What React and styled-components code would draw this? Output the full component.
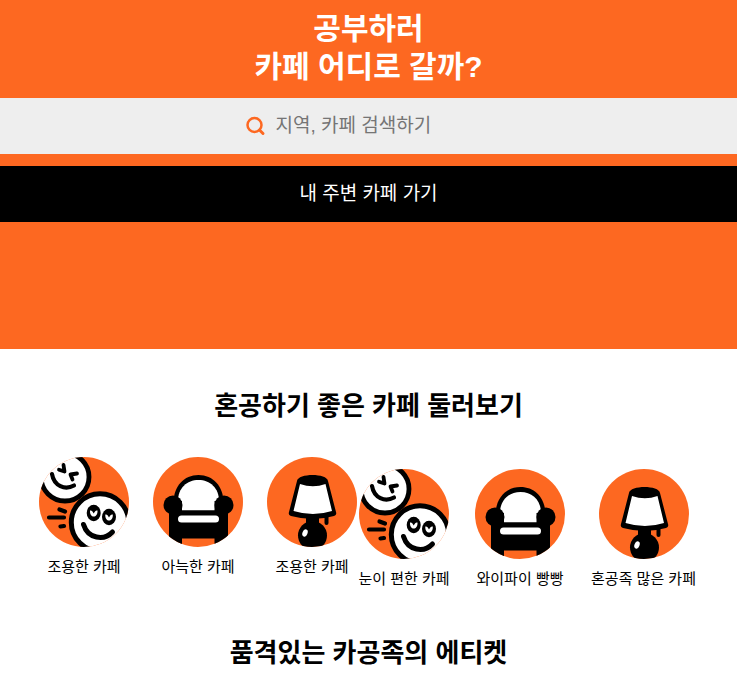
import React from "react";
import styled, { createGlobalStyle } from "styled-components";

const ORANGE = "#fd6821";

const GlobalStyle = createGlobalStyle`
  *, *::before, *::after { box-sizing: border-box; }
  body {
    margin: 0;
    background: #fff;
    color: #000;
    font-family: "Liberation Sans", "Noto Sans CJK KR", sans-serif;
  }
`;

const Hero = styled.header`
  padding: 10px 0 127px;
  background: ${ORANGE};
`;

const Title = styled.h1`
  margin: 0 0 12px;
  color: #fff;
  font-size: 30px;
  line-height: 38px;
  font-weight: 700;
  text-align: center;
`;

const SearchBar = styled.form`
  display: flex;
  align-items: center;
  justify-content: center;
  gap: 10px;
  height: 56px;
  margin-bottom: 12px;
  background: #eeeeee;
`;

const SearchIcon = styled.svg`
  flex: none;
  width: 20px;
  height: 20px;
`;

const SearchInput = styled.input`
  width: 216px;
  padding: 0;
  border: 0;
  outline: 0;
  background: transparent;
  color: #000;
  font-family: inherit;
  font-size: 19px;
  line-height: 28px;

  &::placeholder {
    color: #757575;
    opacity: 1;
  }
`;

const NearbyButton = styled.button`
  display: block;
  width: 100%;
  height: 56px;
  padding: 0;
  border: 0;
  background: #000;
  color: #fff;
  font-family: inherit;
  font-size: 19px;
  line-height: 28px;
  cursor: pointer;
`;

const SectionTitle = styled.h2`
  margin: 0;
  font-size: 26px;
  line-height: 36px;
  font-weight: 700;
  text-align: center;
`;

const Section = styled.section`
  padding: 39px 0 6px;
`;

const Categories = styled.div`
  display: flex;
  justify-content: center;
  padding-top: 33px;
`;

const CategoryList = styled.ul`
  display: flex;
  gap: 24px;
  margin: 0;
  padding: ${({ $lowered }) => ($lowered ? "12px 0 0" : "0")};
  list-style: none;
`;

const CategoryItem = styled.li`
  display: flex;
  flex-direction: column;
  align-items: center;
  gap: 9px;
  min-width: ${({ $width }) => $width}px;
`;

const CategoryPicture = styled.svg`
  width: 90px;
  height: 90px;
  border-radius: 50%;
  background: ${ORANGE};
`;

const CategoryLabel = styled.span`
  font-size: 15px;
  line-height: 22px;
  white-space: nowrap;
`;

function Faces() {
  return (
    <CategoryPicture viewBox="0 0 90 90" aria-hidden="true">
      <g stroke="#000" strokeLinecap="round" strokeLinejoin="round" fill="none" strokeWidth="4.2">
        <circle cx="26" cy="20" r="24" fill="#fff" strokeWidth="4.8" />
        <circle cx="61" cy="65.500" r="28.700" fill="#fff" strokeWidth="5" />
        <path d="M13 17C15 29 26 33.500 35 28.500" />
        <path d="M24.500 8L25.500 14.500L20 12.700M38 16.500L31.500 17.500L33.500 22.500" strokeWidth="3.8" />
        <path d="M44.500 67.500C49 82 65 84 73.500 75" strokeWidth="5" />
        <path d="M20.500 52.500L26 54.500M10 60.500H25M21.500 69.500L25 69" />
      </g>
      <ellipse cx="54.700" cy="56" rx="7" ry="8.200" />
      <ellipse cx="70" cy="60" rx="7" ry="8.200" />
      <path
        d="M51 53.500C50.500 61.500 59 61.500 58.500 53.500C57 53 56 54 54.700 56.500C53.500 54 52.500 53 51 53.500ZM66.300 57.500C65.800 65.500 74.300 65.500 73.800 57.500C72.300 57 71.300 58 70 60.500C68.800 58 67.800 57 66.300 57.500Z"
        fill="#fff"
      />
    </CategoryPicture>
  );
}

function Armchair() {
  return (
    <CategoryPicture viewBox="0 0 90 90" aria-hidden="true">
      <path d="M20.500 46C20.500 29 31 18 45.500 18S70.500 29 70.500 46V58H20.500Z" />
      <path d="M25 44C25 31 34 23 45.500 23S66 31 66 44V53.500H25Z" fill="#fff" />
      <circle cx="20" cy="48" r="9.500" />
      <circle cx="71" cy="48" r="9.500" />
      <path d="M16 44H29V53.500H61.500V44H75V90H61.500V81.500H29V90H16Z" />
      <rect x="25" y="58.500" width="41" height="7" rx="3.500" fill="#fff" />
    </CategoryPicture>
  );
}

function Lamp() {
  return (
    <CategoryPicture viewBox="0 0 90 90" aria-hidden="true">
      <path d="M30 24C31 16 60 16 61 24L69 55Q70 58 67 59Q46 65 24 59Q21 58 22 55Z" />
      <path d="M33 27Q46 31.500 58.500 27L65 54Q46 60 26.500 54Z" fill="#fff" />
      <path d="M39 60H52V68H39Z" />
      <circle cx="45.500" cy="78.500" r="14.500" />
      <path d="M59.500 58V66" stroke="#000" strokeWidth="4" strokeLinecap="round" />
      <ellipse cx="38" cy="76" rx="2.500" ry="3.700" fill="#fff" transform="rotate(22 38 76)" />
    </CategoryPicture>
  );
}

const quietCafes = [
  { label: "조용한 카페", Picture: Faces, width: 90 },
  { label: "아늑한 카페", Picture: Armchair, width: 90 },
  { label: "조용한 카페", Picture: Lamp, width: 90 },
];

const comfortableCafes = [
  { label: "눈이 편한 카페", Picture: Faces, width: 94 },
  { label: "와이파이 빵빵", Picture: Armchair, width: 90 },
  { label: "혼공족 많은 카페", Picture: Lamp, width: 109 },
];

function CategoryGroup({ items, lowered }) {
  return (
    <CategoryList $lowered={lowered}>
      {items.map(({ label, Picture, width }, index) => (
        <CategoryItem key={index} $width={width}>
          <Picture />
          <CategoryLabel>{label}</CategoryLabel>
        </CategoryItem>
      ))}
    </CategoryList>
  );
}

export default function App() {
  return (
    <>
      <GlobalStyle />
      <Hero>
        <Title>
          공부하러
          <br />
          카페 어디로 갈까?
        </Title>
        <SearchBar role="search" onSubmit={(event) => event.preventDefault()}>
          <SearchIcon viewBox="0 0 20 20" fill="none" stroke={ORANGE} strokeLinecap="round" aria-hidden="true">
            <circle cx="8.500" cy="9" r="7" strokeWidth="2.500" />
            <path d="M13.500 14L17 17.500" strokeWidth="3" />
          </SearchIcon>
          <SearchInput type="search" aria-label="지역, 카페 검색하기" placeholder="지역, 카페 검색하기" />
        </SearchBar>
        <NearbyButton type="button">내 주변 카페 가기</NearbyButton>
      </Hero>
      <main>
        <Section>
          <SectionTitle>혼공하기 좋은 카페 둘러보기</SectionTitle>
          <Categories>
            <CategoryGroup items={quietCafes} />
            <CategoryGroup items={comfortableCafes} lowered />
          </Categories>
        </Section>
        <Section>
          <SectionTitle>품격있는 카공족의 에티켓</SectionTitle>
        </Section>
      </main>
    </>
  );
}
